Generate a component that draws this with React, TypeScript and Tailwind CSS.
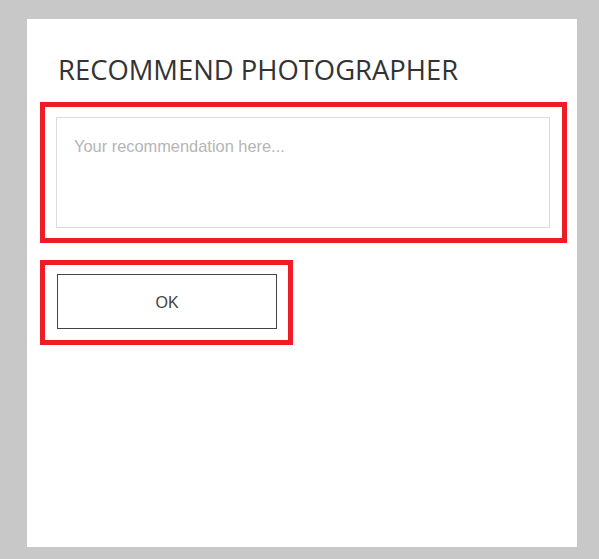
import React, { useState } from 'react'

function RecommendDialog() {
    const [text, setText] = useState<string>('')

    return (
        <div className="ml-[27px] flex h-[528px] w-[550px] flex-col bg-white px-[13px]">
            {/* title */}
            <h2 className="mt-[32px] pl-[18px] font-['Open_Sans',sans-serif] text-[27.4px] leading-[38px] font-normal text-[#333]">
                RECOMMEND PHOTOGRAPHER
            </h2>

            {/* highlighted textarea */}
            <div className="mt-[13px] w-[527px] border-[5px] border-[#ee1c25] pt-[10px] pr-[12px] pb-[10px] pl-[11px]">
                <textarea
                    value={text}
                    onChange={e => setText(e.target.value)}
                    placeholder="Your recommendation here..."
                    className="block h-[111px] w-full resize-none border border-[#dcdcdc] px-[17px] pt-[18px] font-['Liberation_Sans',Arial,sans-serif] text-[16.4px] leading-[20px] text-[#333] outline-none placeholder:text-[#b5b5b5]"
                />
            </div>

            {/* highlighted button */}
            <div className="mt-[17px] w-[253px] border-[5px] border-[#ee1c25] pt-[9px] pr-[11px] pb-[11px] pl-[12px]">
                <button className="flex h-[55px] w-[220px] items-center justify-center border border-[#444] bg-white pt-[3px] font-['Liberation_Sans',Arial,sans-serif] text-[16px] text-[#444]">
                    OK
                </button>
            </div>
        </div>
    )
}

export default function App() {
    return (
        <div className="h-[559px] w-[599px] overflow-hidden bg-[#c8c8c8] pt-[19px]">
            <RecommendDialog />
        </div>
    )
}
